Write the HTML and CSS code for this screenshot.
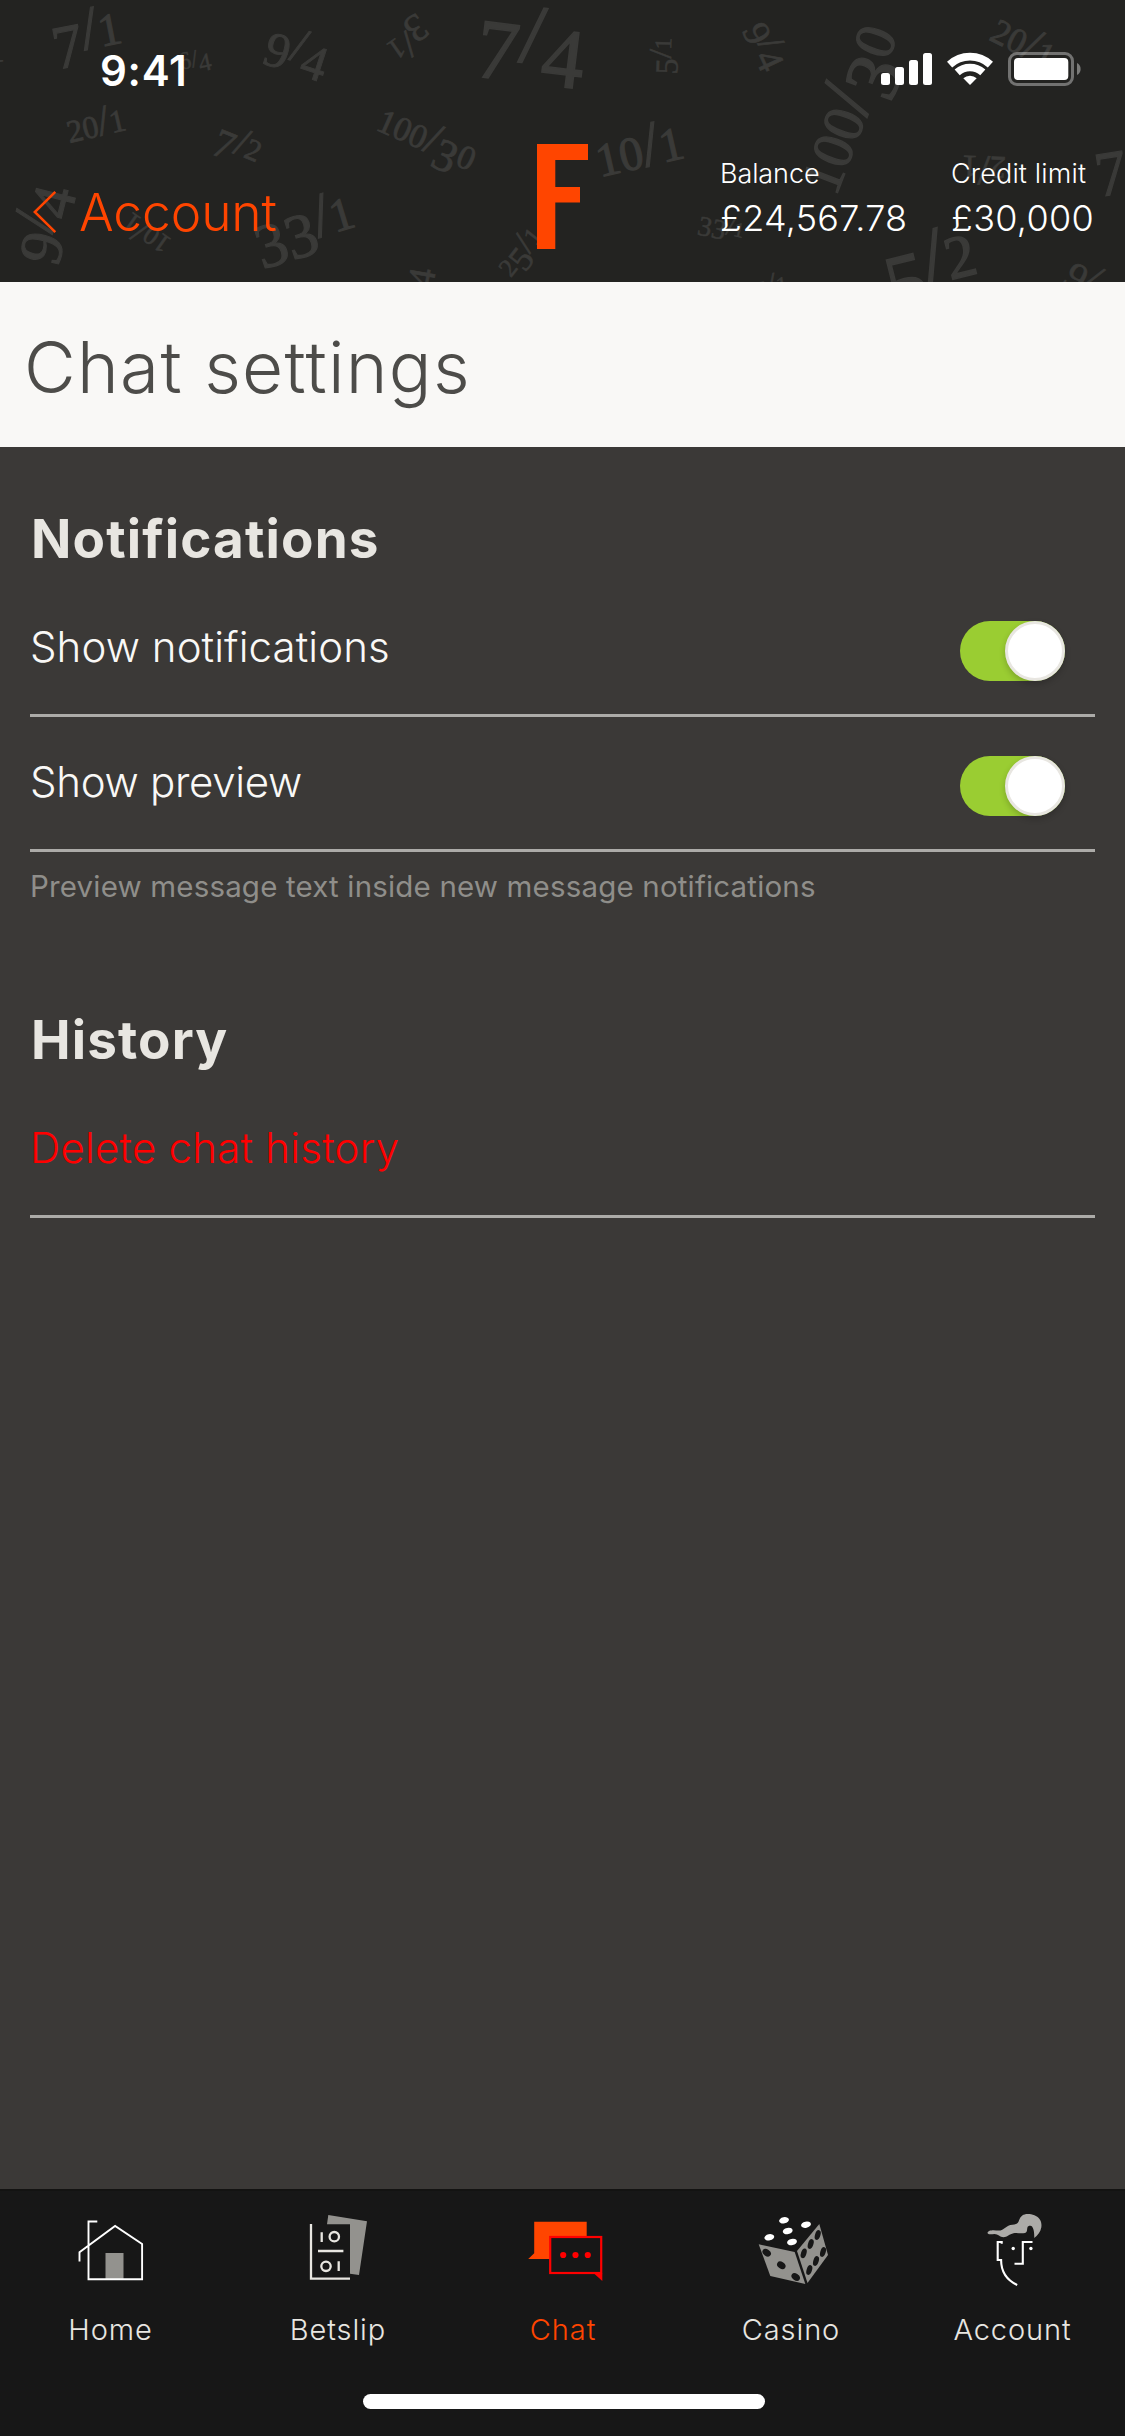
FILE: index.html
```
<!DOCTYPE html>
<html lang="en">
<head>
<meta charset="utf-8">
<title>Chat settings</title>
<link rel="stylesheet" href="styles.css">
</head>
<body>
<div class="screen">
  <header class="header">
    <!-- Decorative odds: .lo digits sit at x-height, .dn digits drop below the baseline -->
    <svg class="odds" width="1125" height="282" viewBox="0 0 1125 282" aria-hidden="true">
      <text y=".15em" transform="translate(-20 58) rotate(-8)" font-size="42"><tspan class="dn">5</tspan>/<tspan class="lo">1</tspan></text>
      <text y=".15em" transform="translate(87 40) rotate(-11)" font-size="62"><tspan class="dn">7</tspan>/<tspan class="lo">1</tspan></text>
      <text y=".15em" transform="translate(195 63) rotate(-12)" font-size="25">6/<tspan class="dn">4</tspan></text>
      <text y=".15em" transform="translate(297 54) rotate(18)" font-size="50"><tspan class="dn">9</tspan>/<tspan class="dn">4</tspan></text>
      <text y=".15em" transform="translate(97 130) rotate(-13)" font-size="43"><tspan class="lo">20</tspan>/<tspan class="lo">1</tspan></text>
      <text y=".15em" transform="translate(237 148) rotate(22)" font-size="41"><tspan class="dn">7</tspan>/<tspan class="lo">2</tspan></text>
      <text y=".15em" transform="translate(45 224) rotate(-76)" font-size="61"><tspan class="dn">9</tspan>/<tspan class="dn">4</tspan></text>
      <text y=".15em" transform="translate(149 230) rotate(215)" font-size="36"><tspan class="lo">10</tspan>/<tspan class="lo">1</tspan></text>
      <text y=".15em" transform="translate(305 232) rotate(-17)" font-size="63"><tspan class="dn">33</tspan>/<tspan class="lo">1</tspan></text>
      <text y=".15em" transform="translate(407 37) rotate(145)" font-size="39"><tspan class="dn">3</tspan>/<tspan class="lo">1</tspan></text>
      <text y=".15em" transform="translate(531 50) rotate(7)" font-size="85"><tspan class="dn">7</tspan>/<tspan class="dn">4</tspan></text>
      <text y=".15em" transform="translate(666 56) rotate(-88)" font-size="32"><tspan class="dn">5</tspan>/<tspan class="lo">1</tspan></text>
      <text y=".15em" transform="translate(425 144) rotate(24)" font-size="46"><tspan class="lo">100</tspan>/<tspan class="dn">3</tspan><tspan class="lo">0</tspan></text>
      <text y=".15em" transform="translate(641 158) rotate(-13)" font-size="64"><tspan class="lo">10</tspan>/<tspan class="lo">1</tspan></text>
      <text y=".15em" transform="translate(523 254) rotate(-52)" font-size="35"><tspan class="lo">2</tspan><tspan class="dn">5</tspan>/<tspan class="lo">1</tspan></text>
      <text y=".15em" transform="translate(417 292) rotate(-80)" font-size="38"><tspan class="dn">9</tspan>/<tspan class="dn">4</tspan></text>
      <text y=".15em" transform="translate(721 229) rotate(12)" font-size="28"><tspan class="dn">33</tspan>/<tspan class="lo">1</tspan></text>
      <text y=".15em" transform="translate(765 46) rotate(65)" font-size="38"><tspan class="dn">9</tspan>/<tspan class="dn">4</tspan></text>
      <text y=".15em" transform="translate(856 112) rotate(-69)" font-size="77"><tspan class="lo">100</tspan>/<tspan class="dn">3</tspan><tspan class="lo">0</tspan></text>
      <text y=".15em" transform="translate(1021 48) rotate(27)" font-size="48"><tspan class="lo">20</tspan>/<tspan class="lo">1</tspan></text>
      <text y=".15em" transform="translate(984 163) rotate(182)" font-size="43"><tspan class="lo">2</tspan>/<tspan class="lo">1</tspan></text>
      <text y=".15em" transform="translate(1131 167) rotate(-9)" font-size="64"><tspan class="dn">7</tspan>/<tspan class="lo">1</tspan></text>
      <text y=".15em" transform="translate(931 272) rotate(-14)" font-size="82"><tspan class="dn">5</tspan>/<tspan class="lo">2</tspan></text>
      <text y=".15em" transform="translate(1090 284) rotate(33)" font-size="40"><tspan class="dn">9</tspan>/<tspan class="dn">4</tspan></text>
      <text y=".15em" transform="translate(770 290) rotate(-8)" font-size="32"><tspan class="dn">5</tspan>/<tspan class="lo">1</tspan></text>
    </svg>

    <div class="status">
      <span class="status-time">9:41</span>
      <svg class="status-icons" width="204" height="40" viewBox="880 50 204 40" aria-hidden="true">
        <g fill="#fff">
          <rect x="881" y="73" width="9" height="12" rx="2.5"/>
          <rect x="895" y="67" width="9" height="18" rx="2.5"/>
          <rect x="909" y="60" width="9" height="25" rx="2.5"/>
          <rect x="923" y="53" width="9" height="32" rx="2.5"/>
          <path d="M970 85L963.3 78.3A10 10 0 0 1 976.7 78.3Z"/>
          <rect x="1014" y="58" width="54.300" height="22" rx="4"/>
        </g>
        <g fill="none" stroke="#fff" stroke-width="7.600">
          <path d="M949.600 64.600A30 30 0 0 1 990.400 64.600"/>
          <path d="M957.200 72.400A19 19 0 0 1 982.800 72.400"/>
        </g>
        <rect x="1009.500" y="53.500" width="63" height="31" rx="7.500" fill="none" stroke="#fff" stroke-opacity=".36" stroke-width="3"/>
        <path d="M1077 63A6.800 6.800 0 0 1 1077 75Z" fill="#fff" fill-opacity=".4"/>
      </svg>
    </div>

    <div class="nav">
      <a class="back">
        <svg width="26" height="46" viewBox="32 189 26 46" aria-hidden="true"><path d="M55.300 191.800L34.800 212L55.300 232.200" fill="none" stroke="#ff4500" stroke-width="2.500"/></svg>
        <span>Account</span>
      </a>
      <svg class="logo" width="51" height="105" viewBox="0 0 51 105" aria-label="F"><path d="M0 0H51V16H18.300V43H43V58.500H18.300V105H0Z" fill="#ff4500"/></svg>
      <div class="funds">
        <div><div class="fund-label">Balance</div><div class="fund-value">£24,567.78</div></div>
        <div><div class="fund-label fund-label-wide">Credit limit</div><div class="fund-value">£30,000</div></div>
      </div>
    </div>
  </header>

  <h1 class="title">Chat settings</h1>

  <main class="main">
    <section class="section">
      <h2>Notifications</h2>
      <div class="row"><span>Show notifications</span><span class="toggle"><span class="thumb"></span></span></div>
      <div class="row row-preview"><span>Show preview</span><span class="toggle"><span class="thumb"></span></span></div>
      <p class="hint">Preview message text inside new message notifications</p>
    </section>
    <section class="section">
      <h2>History</h2>
      <div class="row row-danger"><span>Delete chat history</span></div>
    </section>
  </main>

  <footer class="footer">
    <nav class="tabs">
      <a class="tab">
        <svg width="80" height="76" viewBox="70.500 2212 80 76" aria-hidden="true">
          <rect x="105" y="2253" width="18" height="26" fill="#93928e"/>
          <path d="M96.800 2221.500H88V2279.300H141.600V2244L114.600 2226L79 2252.300V2261.500" fill="none" stroke="#fff" stroke-width="1.900"/>
        </svg>
        <span>Home</span>
      </a>
      <a class="tab">
        <svg width="80" height="76" viewBox="298 2212 80 76" aria-hidden="true">
          <path d="M328.300 2215L367 2221.300L359 2275L350 2273.700V2224.300H327Z" fill="#93928e"/>
          <g fill="none" stroke="#e8e6e1" stroke-width="2.300">
            <path d="M311 2224V2278.600H350M321.700 2232.300V2242M318 2251H343.400M338.700 2261.300V2271"/>
            <circle cx="334.300" cy="2236.700" r="4.700"/>
            <circle cx="326" cy="2266.300" r="4.700"/>
          </g>
        </svg>
        <span>Betslip</span>
      </a>
      <a class="tab tab-active">
        <svg width="80" height="76" viewBox="523.500 2212 80 76" aria-hidden="true">
          <path d="M534.700 2221.700H587.200V2237H551V2259H528.700L534.700 2253.300Z" fill="#ff4500"/>
          <rect x="550.700" y="2237" width="51" height="36" fill="none" stroke="#f00" stroke-width="2.200"/>
          <path d="M594.500 2273.500H602.800V2281Z" fill="#f00"/>
          <g fill="#f00"><circle cx="563.700" cy="2255" r="3.100"/><circle cx="576" cy="2255" r="3.100"/><circle cx="588.300" cy="2255" r="3.100"/></g>
        </svg>
        <span>Chat</span>
      </a>
      <a class="tab">
        <svg width="80" height="76" viewBox="751 2212 80 76" aria-hidden="true">
          <g fill="#93928e"><path d="M758.700 2244.300L794.700 2252L805.300 2284L770.300 2276Z"/><path d="M819.300 2224L828 2255L807.500 2283L797 2251Z"/></g>
          <g fill="#fff">
            <ellipse transform="translate(784 2220.300) rotate(-12)" rx="5" ry="3.100"/>
            <ellipse transform="translate(806 2224.700) rotate(-12)" rx="5" ry="3.100"/>
            <ellipse transform="translate(787.700 2231) rotate(-12)" rx="5" ry="3.100"/>
            <ellipse transform="translate(769.300 2237.300) rotate(-12)" rx="5" ry="3.100"/>
            <ellipse transform="translate(792 2242) rotate(-12)" rx="5" ry="3.100"/>
          </g>
          <g fill="#171717">
            <ellipse transform="translate(766.700 2252.700) rotate(35)" rx="4.600" ry="3.300"/>
            <ellipse transform="translate(781.300 2265.300) rotate(35)" rx="4.600" ry="3.300"/>
            <ellipse transform="translate(795.700 2277) rotate(35)" rx="4.600" ry="3.300"/>
            <ellipse transform="translate(803.700 2253.300) rotate(18)" rx="2.700" ry="5"/>
            <ellipse transform="translate(810.700 2244) rotate(18)" rx="2.700" ry="5"/>
            <ellipse transform="translate(817.700 2235) rotate(18)" rx="2.700" ry="5"/>
            <ellipse transform="translate(809.300 2270) rotate(18)" rx="2.700" ry="5"/>
            <ellipse transform="translate(816 2261) rotate(18)" rx="2.700" ry="5"/>
            <ellipse transform="translate(823 2252) rotate(18)" rx="2.700" ry="5"/>
          </g>
        </svg>
        <span>Casino</span>
      </a>
      <a class="tab">
        <svg width="80" height="76" viewBox="972.500 2212 80 76" aria-hidden="true">
          <path d="M987 2233C987.500 2229.500 994 2230 998 2230.600C1004 2230.600 1005.500 2225 1012 2224.700C1016 2224.500 1017.500 2223.500 1018.500 2220.500C1020 2216 1023 2214 1027 2214C1032 2214 1036.500 2215.500 1039 2219C1041 2221.500 1041.200 2225 1040.800 2227.500C1040 2232 1037 2235.500 1033.700 2238C1034 2233 1033 2226 1030 2225.800C1026.500 2225.600 1027 2228 1026.600 2229.500C1026.500 2231.500 1026 2232.500 1024.500 2233C1020 2234 1017 2232.500 1013 2233.200C1009 2234 1006.500 2237.200 1003 2237.200C999.500 2237.200 997.500 2234 994 2234C991.500 2234 987.500 2235 987 2233Z" fill="#acaba8"/>
          <g fill="none" stroke="#fff" stroke-width="2.100">
            <path d="M1001.200 2243.800V2242H997.200V2260H1000.600C1000.600 2272 1006 2280 1016.700 2285"/>
            <path d="M1032 2242H1022.300V2263.700H1014"/>
          </g>
          <g fill="#fff"><circle cx="1012.700" cy="2248.500" r="1.700"/><circle cx="1030.400" cy="2248.500" r="1.700"/></g>
        </svg>
        <span>Account</span>
      </a>
    </nav>
    <div class="home-indicator"></div>
  </footer>
</div>
</body>
</html>
```
FILE: styles.css
```
* { box-sizing: border-box; }

body {
  margin: 0;
  background: #3b3937;
  font-family: Inter, "Liberation Sans", sans-serif;
  font-weight: 300;
}

h1, h2, p { margin: 0; }

.screen {
  width: 1125px;
  height: 2436px;
  display: flex;
  flex-direction: column;
  overflow: hidden;
}

/* Header */
.header {
  position: relative;
  flex: none;
  height: 282px;
  background: #232321;
  color: #fff;
}

.odds {
  position: absolute;
  inset: 0;
}

.odds text {
  font-family: "Liberation Serif", serif;
  fill: #3a3a38;
  stroke: #3a3a38;
  stroke-width: 0.018em;
  text-anchor: middle;
}

.odds .lo { font-size: 0.74em; }
.odds .dn { baseline-shift: -0.23em; }

.status,
.nav { position: relative; }

.status {
  height: 132px;
  display: flex;
  justify-content: space-between;
  padding: 46px 41px 0 100px;
}

.status-time {
  font-size: 42px;
  line-height: 50px;
  font-weight: 600;
  letter-spacing: 0.7px;
}

.status-icons { margin-top: 4px; }

.nav {
  height: 150px;
  display: grid;
  grid-template-columns: 537px 51px 1fr;
  align-items: start;
}

.back {
  display: flex;
  align-items: center;
  gap: 21px;
  padding: 50px 0 0 32px;
  color: #ff4500;
  font-size: 51.5px;
  line-height: 60px;
  letter-spacing: -0.1px;
}

.logo { margin-top: 12px; }

.funds {
  display: grid;
  grid-template-columns: 231px auto;
  justify-content: start;
  padding: 24px 0 0 132px;
}

.fund-label {
  font-size: 27px;
  line-height: 36px;
  letter-spacing: -0.1px;
}

.fund-label-wide { letter-spacing: 0.15px; }

.fund-value {
  margin-top: 2px;
  font-size: 36px;
  line-height: 48px;
  letter-spacing: 0.3px;
}

.title {
  flex: none;
  height: 165px;
  padding: 6px 24px 0;
  background: #f9f8f6;
  color: #4d4c49;
  font-size: 71px;
  font-weight: 300;
  line-height: 159px;
  letter-spacing: 1.3px;
}

/* Settings */
.main {
  flex: 1;
  display: flex;
  flex-direction: column;
  gap: 102px;
  padding: 60px 30px 0;
}

.section h2 {
  margin: 0 0 11px 1px;
  color: #e8e6e1;
  font-size: 53px;
  font-weight: 700;
  line-height: 64px;
  letter-spacing: 1.12px;
}

.row {
  height: 135px;
  display: flex;
  justify-content: space-between;
  align-items: flex-start;
  padding: 37px 30px 0 0;
  border-bottom: 3px solid #acaba8;
  color: #f9f8f6;
  font-size: 42px;
  line-height: 55px;
  letter-spacing: 0.08px;
}

.row-preview { letter-spacing: -0.3px; }

.row-danger {
  color: #f00;
  letter-spacing: 0.22px;
}

.toggle {
  width: 105px;
  height: 60px;
  margin-top: 2px;
  display: flex;
  justify-content: flex-end;
  border-radius: 30px;
  background: #9acd32;
}

.thumb {
  width: 60px;
  height: 60px;
  border: 3px solid #e8e6e1;
  border-radius: 50%;
  background: #fff;
  box-shadow: 0 3px 6px rgba(0, 0, 0, 0.2);
}

.hint {
  margin-top: 14px;
  color: #8f8e8a;
  font-size: 29.5px;
  font-weight: 400;
  line-height: 40px;
  letter-spacing: 0.17px;
}

/* Tab bar */
.footer {
  flex: none;
  height: 247px;
  padding-top: 21px;
  border-top: 2px solid #131312;
  background: #171717;
}

.tabs {
  display: grid;
  grid-template-columns: 221px 234px 216px 240px 203px;
}

.tab {
  display: flex;
  flex-direction: column;
  align-items: center;
  gap: 22px;
  color: #e8e6e1;
  font-size: 29px;
  line-height: 40px;
  letter-spacing: 0.9px;
}

.tab-active { color: #ff4500; }

.home-indicator {
  width: 402px;
  height: 15px;
  margin: 44px 0 0 363px;
  border-radius: 7.5px;
  background: #fff;
}
```
